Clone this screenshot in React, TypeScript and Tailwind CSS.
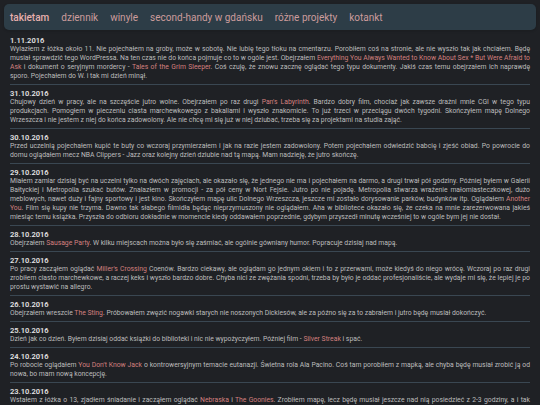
import React from "react";

type Part = string | { link: string };

const entries: { date: string; text: Part[] }[] = [
  {
    date: "1.11.2016",
    text: [
      "Wylazłem z łóżka około 11. Nie pojechałem na groby, może w sobotę. Nie lubię tego tłoku na cmentarzu. Porobiłem coś na stronie, ale nie wyszło tak jak chciałem. Będę musiał sprawdzić tego WordPressa. Na ten czas nie do końca pojmuje co to w ogóle jest. Obejrzałem ",
      { link: "Everything You Always Wanted to Know About Sex * But Were Afraid to Ask" },
      " i dokument o seryjnym mordercy - ",
      { link: "Tales of the Grim Sleeper" },
      ". Coś czuję, że znowu zacznę oglądać tego typu dokumenty. Jakiś czas temu obejrzałem ich naprawdę sporo. Pojechałem do W. i tak mi dzień minął.",
    ],
  },
  {
    date: "31.10.2016",
    text: [
      "Chujowy dzień w pracy, ale na szczęście jutro wolne. Obejrzałem po raz drugi ",
      { link: "Pan's Labyrinth" },
      ". Bardzo dobry film, chociaż jak zawsze drażni mnie CGI w tego typu produkcjach. Pomogłem w pieczeniu ciasta marchewkowego z bakaliami i wyszło znakomicie. To już trzeci w przeciągu dwóch tygodni. Skończyłem mapę Dolnego Wrzeszcza i nie jestem z niej do końca zadowolony. Ale nie chcę mi się już w niej dziubać, trzeba się za projektami na studia zająć.",
    ],
  },
  {
    date: "30.10.2016",
    text: [
      "Przed uczelnią pojechałem kupić te buty co wczoraj przymierzałem i jak na razie jestem zadowolony. Potem pojechałem odwiedzić babcię i zjeść obiad. Po powrocie do domu oglądałem mecz NBA Clippers - Jazz oraz kolejny dzień dziubie nad tą mapą. Mam nadzieję, że jutro skończę.",
    ],
  },
  {
    date: "29.10.2016",
    text: [
      "Miałem zamiar dzisiaj być na uczelni tylko na dwóch zajęciach, ale okazało się, że jednego nie ma i pojechałem na darmo, a drugi trwał pół godziny. Później byłem w Galerii Bałtyckiej i Metropolia szukać butów. Znalazłem w promocji - za pół ceny w Nort Fejsie. Jutro po nie pojadę. Metropolia stwarza wrażenie małomiasteczkowej, dużo meblowych, nawet duży i fajny sportowy i jest kino. Skończyłem mapę ulic Dolnego Wrzeszcza, jeszcze mi zostało dorysowanie parków, budynków itp. Oglądałem ",
      { link: "Another You" },
      ". Film się kupy nie trzyma. Dawno tak słabego filmidła będąc nieprzymuszony nie oglądałem. Aha w bibliotece okazało się, że czeka na mnie zarezerwowana jakieś miesiąc temu książka. Przyszła do odbioru dokładnie w momencie kiedy oddawałem poprzednie, gdybym przyszedł minutę wcześniej to w ogóle bym jej nie dostał.",
    ],
  },
  {
    date: "28.10.2016",
    text: [
      "Obejrzałem ",
      { link: "Sausage Party" },
      ". W kilku miejscach można było się zaśmiać, ale ogólnie gówniany humor. Popracuje dzisiaj nad mapą.",
    ],
  },
  {
    date: "27.10.2016",
    text: [
      "Po pracy zacząłem oglądać ",
      { link: "Miller's Crossing" },
      " Coenów. Bardzo ciekawy, ale oglądam go jednym okiem i to z przerwami, może kiedyś do niego wrócę. Wczoraj po raz drugi zrobiłem ciasto marchewkowe, a raczej keks i wyszło bardzo dobre. Chyba nici ze zwężania spodni, trzeba by było je oddać profesjonaliście, ale wydaje mi się, że lepiej je po prostu wystawić na allegro.",
    ],
  },
  {
    date: "26.10.2016",
    text: [
      "Obejrzałem wreszcie ",
      { link: "The Sting" },
      ". Próbowałem zwęzić nogawki starych nie noszonych Dickiesów, ale za późno się za to zabrałem i jutro będę musiał dokończyć.",
    ],
  },
  {
    date: "25.10.2016",
    text: [
      "Dzień jak co dzień. Byłem dzisiaj oddać książki do biblioteki i nic nie wypożyczyłem. Później film - ",
      { link: "Silver Streak" },
      " i spać.",
    ],
  },
  {
    date: "24.10.2016",
    text: [
      "Po robocie oglądałem ",
      { link: "You Don't Know Jack" },
      " o kontrowersyjnym temacie eutanazji. Świetna rola Ala Pacino. Coś tam porobiłem z mapką, ale chyba będę musiał zrobić ją od nowa, bo mam nową koncepcję.",
    ],
  },
  {
    date: "23.10.2016",
    text: [
      "Wstałem z łóżka o 13, zjadłem śniadanie i zacząłem oglądać ",
      { link: "Nebraska" },
      " i ",
      { link: "The Goonies" },
      ". Zrobiłem mapę, lecz będę musiał jeszcze nad nią posiedzieć z 2-3 godziny, a i tak pewnie coś będę jeszcze poprawiał. Wieczorem trochę poczytałem.",
    ],
  },
];

const navItems = ["dziennik", "winyle", "second-handy w gdańsku", "różne projekty", "kotankt"];

const Entry = ({ entry }: any) => (
  <div className="border-b border-[#3a4752] pt-[4px] pb-[3px]">
    <div className="text-[7.5px] leading-[9px] font-semibold text-[#e4e4e4]">{entry.date}</div>
    <p className="text-[6.8px] leading-[9px] text-[#bdbdbd] text-justify">
      {entry.text.map((part: Part, i: number) =>
        typeof part === "string" ? (
          <span key={i}>{part}</span>
        ) : (
          <a key={i} href="#" className="text-[#d4807f]">
            {part.link}
          </a>
        )
      )}
    </p>
  </div>
);

const App = () => {
  return (
    <div
      className="w-[540px] h-[405px] overflow-hidden bg-[#1f2125]"
      style={{ fontFamily: "Roboto, 'Noto Sans', sans-serif" }}
    >
      <nav className="mx-[4px] mt-[4px] h-[26px] rounded-[5px] bg-[#2d3d47] flex items-center gap-[12px] px-[6px] text-[10px] shadow">
        <a href="#" className="font-medium text-[#e8b0ae]">
          takietam
        </a>
        {navItems.map((item) => (
          <a key={item} href="#" className="text-[#cc9c9c]">
            {item}
          </a>
        ))}
      </nav>
      <main className="px-[10px] pt-[2px]">
        {entries.map((entry) => (
          <Entry key={entry.date} entry={entry} />
        ))}
      </main>
    </div>
  );
};

export default App;
